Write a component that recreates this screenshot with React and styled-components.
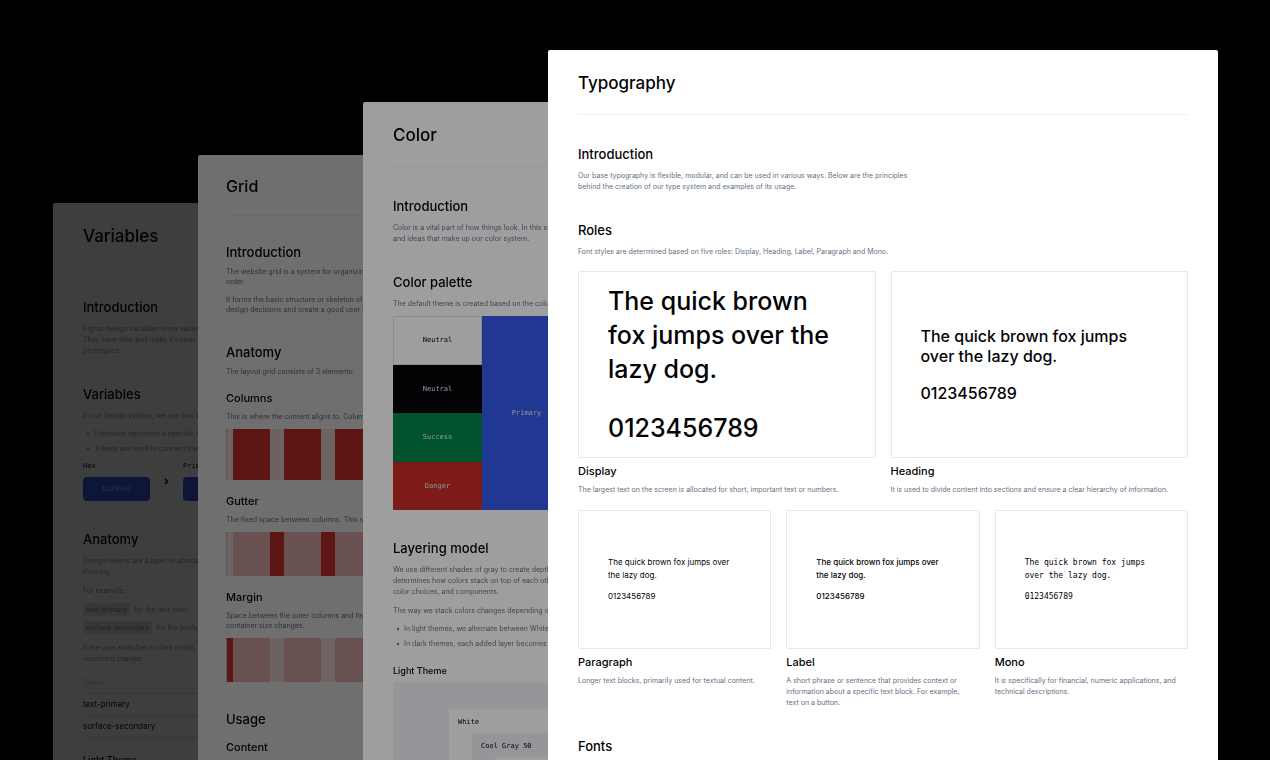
import React from 'react';
import styled, { createGlobalStyle } from 'styled-components';
import { ChevronRight } from 'lucide-react';

const sans = '"Inter", "Liberation Sans", sans-serif';
const mono = '"DejaVu Sans Mono", "Liberation Mono", monospace';
const ink = '#030306';
const muted = '#667085';
const line = '#e8e9f0';

const GlobalStyle = createGlobalStyle`
    * {
        box-sizing: border-box;
        margin: 0;
        padding: 0;
    }

    body {
        background: #000;
        color: ${ink};
        font-family: ${sans};
    }
`

const Canvas = styled.main`
    display: flex;
    height: 100vh;
    padding: 0 52px 0 53px;
    overflow: hidden;
    background: #000;
`

// each sheet runs a few pixels under the next one, so its rounded corner has something behind it
const Sheet = styled.article`
    flex: ${props => props.$strip ? `0 0 ${props.$strip + 4}px` : '1 1 0'};
    min-width: 0;
    margin-top: ${props => props.$top}px;
    margin-right: ${props => props.$strip ? '-4px' : '0'};
    padding: ${props => props.$dense ? '20px 28px' : '21px 30px'};
    border-radius: 2px 2px 0 0;
    background: #fff;
    color: ${ink};
    overflow: hidden;
    white-space: ${props => props.$strip ? 'nowrap' : 'normal'};
    filter: ${props => props.$light ? `brightness(${props.$light})` : 'none'};
    position: relative;
`

const Body = styled.div`
    width: ${props => props.$wide ? '610px' : 'auto'};
`

const Title = styled.h1`
    padding-bottom: ${props => props.$dense ? '18px' : '19px'};
    border-bottom: 1px solid ${props => props.$plain ? 'transparent' : '#f1f1f5'};
    font-size: ${props => props.$dense ? '16px' : '17px'};
    line-height: ${props => props.$dense ? '22px' : '24px'};
    font-weight: 500;
`

const Heading = styled.h2`
    margin-top: ${props => props.$dense ? '28px' : '29px'};
    font-size: 13px;
    line-height: 18px;
    font-weight: 500;

    ${Title} + & {
        margin-top: ${props => props.$dense ? '27px' : '30px'};
    }
`

const Subheading = styled.h3`
    margin-top: ${props => props.$gap || 14}px;
    font-size: ${props => props.$small ? '9px' : '11px'};
    line-height: 14px;
    font-weight: 500;
`

const Text = styled.p`
    margin-top: 8px;
    color: ${props => props.$color || muted};
    font-size: 7px;
    line-height: ${props => props.$dense ? '10px' : '11px'};

    ${Heading} + & {
        margin-top: ${props => props.$dense ? '6px' : '7px'};
    }

    ${Subheading} + & {
        margin-top: 7px;
    }
`

const Bullets = styled.ul`
    display: grid;
    gap: 4px;
    margin-top: 7px;
    padding-left: 11px;
    list-style: none;
    color: ${props => props.$color || muted};
    font-size: 7px;
    line-height: 11px;

    li::before {
        content: '•';
        display: inline-block;
        width: 8px;
        margin-left: -8px;
    }
`

/* Variables */

const faded = '#8f91a8';

const Mapping = styled.div`
    display: flex;
    gap: 12px;
    margin-top: 7px;
`

const Variable = styled.div`
    font-family: ${mono};
    font-size: 7px;
    line-height: 11px;
`

const Pill = styled.div`
    display: flex;
    align-items: center;
    justify-content: center;
    width: 67px;
    height: 24px;
    margin-top: 5px;
    border-radius: 4px;
    background: #3259e8;
    color: #a9b6f0;
`

const Arrow = styled(ChevronRight)`
    width: 9px;
    height: 9px;
    margin-top: 16px;
    stroke-width: 4;
`

const TokenLine = styled.div`
    display: flex;
    align-items: center;
    gap: 4px;
    margin-top: ${props => props.$first ? '7px' : '5px'};
    color: ${faded};
    font-size: 7px;
    line-height: 13px;
`

const Token = styled.code`
    padding: 0 3px;
    border-radius: 1px;
    background: #dfe5ee;
    color: #7c7f98;
    font-family: ${sans};
`

const TokenTable = styled.table`
    width: 100%;
    margin-top: 8px;
    border-collapse: separate;
    border-spacing: 0;
    font-size: 8px;
    text-align: left;

    th, td {
        height: 22px;
        border-bottom: 1px solid #dcdce4;
        font-weight: 400;
        line-height: 11px;
    }

    th {
        color: #b9b9c6;
        font-size: 7px;
    }
`

/* Grid */

const Bars = styled.div`
    display: flex;
    height: ${props => props.$tall ? '51px' : '44px'};
    margin-top: 7px;
    background: ${props => props.$gutter};
    background-clip: padding-box;
    border-left: 1px dotted #b98f8f;
`

const Margin = styled.span`
    flex: 0 0 6px;
    background: ${props => props.$fill};
`

const Column = styled.span`
    flex: 0 0 37px;
    margin-right: 14px;
    background: ${props => props.$fill};
`

const red = '#d6332e';
const pink = '#f1baba';
const blush = '#fbe2e2';

/* Color */

const Palette = styled.div`
    display: grid;
    grid-template-columns: repeat(5, 89px);
    grid-template-rows: repeat(4, 1fr);
    grid-auto-flow: column;
    height: 194px;
    margin-top: 7px;
`

const Swatch = styled.div`
    display: flex;
    align-items: center;
    justify-content: center;
    grid-row: ${props => props.$full ? '1 / -1' : 'auto'};
    border: ${props => props.$outlined ? '1px solid #e0e1e8' : '0'};
    background: ${props => props.$fill};
    color: ${props => props.$outlined ? ink : '#e9eaf2'};
    font-family: ${mono};
    font-size: 7px;
`

const Layer = styled.div`
    width: max-content;
    min-width: 100%;
    margin-top: ${props => props.$root ? '4px' : '5px'};
    margin-left: ${props => props.$root ? '0' : '14px'};
    padding: ${props => props.$root ? '22px 0 60px 42px' : '7px 0 12px 9px'};
    background: ${props => props.$gray ? '#f1f0f8' : '#fff'};
    font-family: ${mono};
    font-size: 7px;
    line-height: 12px;
`

/* Typography */

const Roles = styled.div`
    display: grid;
    grid-template-columns: repeat(${props => props.$columns}, 1fr);
    gap: 15px;
    margin-top: ${props => props.$first ? '14px' : '15px'};
`

const Role = styled.section`
    ${Subheading} {
        margin-top: 6px;
    }

    ${Subheading} + ${Text} {
        margin-top: 6px;
    }
`

const Specimen = styled.div`
    display: flex;
    flex-direction: column;
    justify-content: center;
    gap: ${props => props.$kind.gap};
    height: ${props => props.$kind.box};
    padding-left: 29px;
    border: 1px solid ${line};
    border-radius: 1px;
    font-family: ${props => props.$kind.family || sans};
    font-size: ${props => props.$kind.size};
    line-height: ${props => props.$kind.leading};
    font-weight: ${props => props.$kind.weight};
    white-space: nowrap;
`

const kinds = {
    display: { box: '187px', gap: '25px', size: '25px', leading: '34px', weight: 500 },
    heading: { box: '187px', gap: '17px', size: '16px', leading: '20px', weight: 500 },
    paragraph: { box: '139px', gap: '8px', size: '8px', leading: '13px', weight: 400 },
    label: { box: '139px', gap: '8px', size: '8px', leading: '13px', weight: 500 },
    mono: { box: '139px', gap: '8px', size: '8px', leading: '13px', weight: 400, family: mono },
};

const Lines = ({ of }) => of.map((text, i) => (
    <React.Fragment key={text}>
        {i > 0 && <br />}
        {text}
    </React.Fragment>
));

const RoleCard = ({ name, kind, sample, children }) => (
    <Role>
        <Specimen $kind={kinds[kind]}>
            <p><Lines of={sample} /></p>
            <p>0123456789</p>
        </Specimen>
        <Subheading>{name}</Subheading>
        <Text>{children}</Text>
    </Role>
);

const GridBars = ({ tall, margin, column, gutter }) => (
    <Bars $tall={tall} $gutter={gutter}>
        <Margin $fill={margin} />
        {[1, 2, 3, 4].map(n => <Column key={n} $fill={column} />)}
    </Bars>
);

const VariablesSheet = () => (
    <Sheet $strip={145} $top={203} $light={0.245}>
        <Body $wide>
            <Title $plain>Variables</Title>
            <Heading>Introduction</Heading>
            <Text $color={faded}>
                <Lines of={['Figma design variables store values', 'They save time and make it easier', 'prototypes.']} />
            </Text>
            <Heading>Variables</Heading>
            <Text $color={faded}>In our design system, we use two types</Text>
            <Bullets $color={faded}>
                <li>Primitives represent a specific value</li>
                <li>Tokens are used to connect the</li>
            </Bullets>
            <Mapping>
                <Variable>
                    Hex
                    <Pill>#3259E8</Pill>
                </Variable>
                <Arrow />
                <Variable>
                    Primitive
                    <Pill />
                </Variable>
            </Mapping>
            <Heading>Anatomy</Heading>
            <Text $color={faded}>
                <Lines of={['Design tokens are a layer of abstraction', 'theming.']} />
            </Text>
            <Text $color={faded}>For example,</Text>
            <TokenLine $first><Token>text-primary</Token> for the text color</TokenLine>
            <TokenLine><Token>surface-secondary</Token> for the background</TokenLine>
            <Text $color={faded}>
                <Lines of={['If the user switches to dark mode,', 'represent change.']} />
            </Text>
            <TokenTable>
                <thead>
                    <tr><th scope="col">Token</th></tr>
                </thead>
                <tbody>
                    <tr><td>text-primary</td></tr>
                    <tr><td>surface-secondary</td></tr>
                </tbody>
            </TokenTable>
            <Subheading $small $gap={15}>Light Theme</Subheading>
        </Body>
    </Sheet>
);

const GridSheet = () => (
    <Sheet $dense $strip={165} $top={155} $light={0.435}>
        <Body $wide>
            <Title $dense>Grid</Title>
            <Heading $dense>Introduction</Heading>
            <Text $dense>
                <Lines of={['The website grid is a system for organizing', 'order.']} />
            </Text>
            <Text $dense>
                <Lines of={['It forms the basic structure or skeleton of your', 'design decisions and create a good user experience']} />
            </Text>
            <Heading $dense>Anatomy</Heading>
            <Text $dense>The layout grid consists of 3 elements:</Text>
            <Subheading>Columns</Subheading>
            <Text $dense>This is where the content aligns to. Columns</Text>
            <GridBars tall margin={blush} column={red} gutter={blush} />
            <Subheading>Gutter</Subheading>
            <Text $dense>The fixed space between columns. This space</Text>
            <GridBars margin={blush} column={pink} gutter={red} />
            <Subheading>Margin</Subheading>
            <Text $dense>
                <Lines of={['Space between the outer columns and its container', 'container size changes.']} />
            </Text>
            <GridBars margin={red} column={pink} gutter={blush} />
            <Heading $dense>Usage</Heading>
            <Subheading $gap={12}>Content</Subheading>
        </Body>
    </Sheet>
);

const ColorSheet = () => (
    <Sheet $strip={185} $top={102} $light={0.62}>
        <Body $wide>
            <Title>Color</Title>
            <Heading>Introduction</Heading>
            <Text>
                <Lines of={['Color is a vital part of how things look. In this section', 'and ideas that make up our color system.']} />
            </Text>
            <Heading>Color palette</Heading>
            <Text>The default theme is created based on the colors</Text>
            <Palette>
                <Swatch $outlined $fill="#fff">Neutral</Swatch>
                <Swatch $fill="#030308">Neutral</Swatch>
                <Swatch $fill="#008649">Success</Swatch>
                <Swatch $fill="#c92d23">Danger</Swatch>
                <Swatch $full $fill="#355aed">Primary</Swatch>
            </Palette>
            <Heading>Layering model</Heading>
            <Text>
                <Lines
                    of={[
                        'We use different shades of gray to create depth',
                        'determines how colors stack on top of each other',
                        'color choices, and components.',
                    ]}
                />
            </Text>
            <Text>The way we stack colors changes depending on</Text>
            <Bullets>
                <li>In light themes, we alternate between White</li>
                <li>In dark themes, each added layer becomes</li>
            </Bullets>
            <Subheading $small $gap={15}>Light Theme</Subheading>
            <Layer $root $gray>
                <Layer>
                    White
                    <Layer $gray>
                        Cool Gray 50
                        <Layer />
                    </Layer>
                </Layer>
            </Layer>
        </Body>
    </Sheet>
);

const TypographySheet = () => (
    <Sheet $top={50}>
        <Body>
            <Title>Typography</Title>
            <Heading>Introduction</Heading>
            <Text>
                Our base typography is flexible, modular, and can be used in various ways. Below are the principles
                <br />
                behind the creation of our type system and examples of its usage.
            </Text>
            <Heading>Roles</Heading>
            <Text>Font styles are determined based on five roles: Display, Heading, Label, Paragraph and Mono.</Text>
            <Roles $first $columns={2}>
                <RoleCard name="Display" kind="display" sample={['The quick brown', 'fox jumps over the', 'lazy dog.']}>
                    The largest text on the screen is allocated for short, important text or numbers.
                </RoleCard>
                <RoleCard name="Heading" kind="heading" sample={['The quick brown fox jumps', 'over the lazy dog.']}>
                    It is used to divide content into sections and ensure a clear hierarchy of information.
                </RoleCard>
            </Roles>
            <Roles $columns={3}>
                <RoleCard name="Paragraph" kind="paragraph" sample={['The quick brown fox jumps over', 'the lazy dog.']}>
                    Longer text blocks, primarily used for textual content.
                </RoleCard>
                <RoleCard name="Label" kind="label" sample={['The quick brown fox jumps over', 'the lazy dog.']}>
                    A short phrase or sentence that provides context or
                    information about a specific text block. For example,
                    <br />
                    text on a button.
                </RoleCard>
                <RoleCard name="Mono" kind="mono" sample={['The quick brown fox jumps', 'over the lazy dog.']}>
                    It is specifically for financial, numeric applications, and technical descriptions.
                </RoleCard>
            </Roles>
            <Heading>Fonts</Heading>
        </Body>
    </Sheet>
);

export default function App() {
    return (
        <Canvas>
            <GlobalStyle />
            <VariablesSheet />
            <GridSheet />
            <ColorSheet />
            <TypographySheet />
        </Canvas>
    );
}
